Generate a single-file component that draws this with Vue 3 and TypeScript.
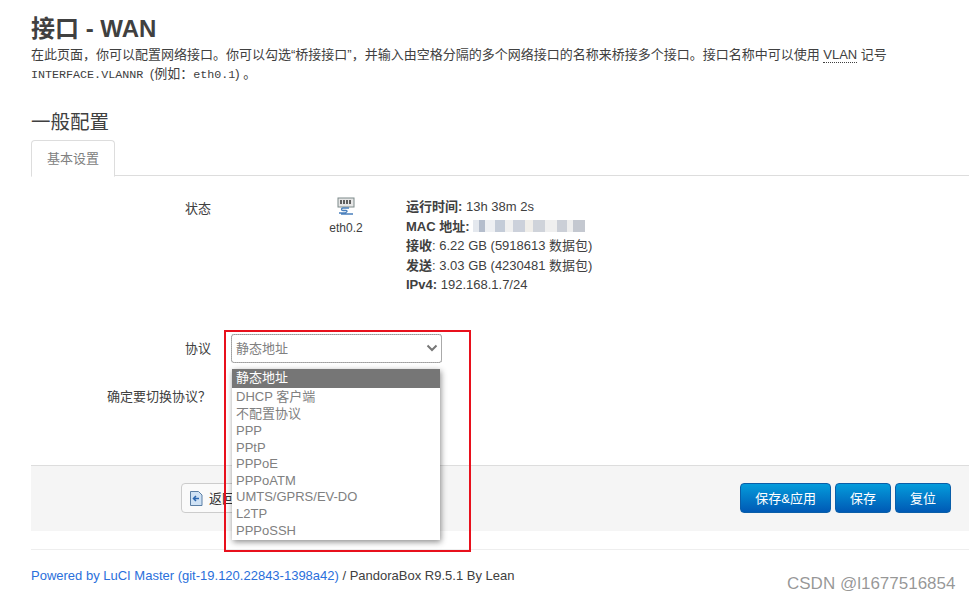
<script setup lang="ts">
const options: string[] = ['静态地址', 'DHCP 客户端', '不配置协议', 'PPP', 'PPtP', 'PPPoE', 'PPPoATM', 'UMTS/GPRS/EV-DO', 'L2TP', 'PPPoSSH']
</script>

<template>
  <div class="page">
    <h2 class="title">接口 - WAN</h2>
    <p class="desc">在此页面&#xFF0C;你可以配置网络接口。你可以勾选“桥接接口”&#xFF0C;并输入由空格分隔的多个网络接口的名称来桥接多个接口。接口名称中可以使用 <abbr class="abbr">VLAN</abbr> 记号<br><code class="mono iface">INTERFACE.VLANNR</code> (例如&#xFF1A;<code class="mono">eth0.1</code>) 。</p>
    <h3 class="section">一般配置</h3>
    <div class="tabs"><div class="tab">基本设置</div></div>

    <div class="row status-row">
      <div class="label">状态</div>
      <div class="device">
        <svg class="dev-icon" width="18" height="18" viewBox="0 0 18 18">
          <rect x="1" y="1" width="16" height="9" fill="#e6e6e6" stroke="#7d8a8a" />
          <path d="M3 4h2M6 4h2M9 4h2M12 4h2M3 6h2M6 6h2M9 6h2M12 6h2" stroke="#333" stroke-width="1.6" />
          <path d="M12 11H6c-2 0-2 2.500 0 2.500h3c2 0 1 2-1 2.500H2M4 17h12" stroke="#4a80bd" stroke-width="1.300" fill="none" />
        </svg>
        <div>eth0.2</div>
      </div>
      <div class="info">
        <div><b>运行时间:</b> 13h 38m 2s</div>
        <div class="mac-line"><b>MAC 地址:</b> <span class="mac"></span></div>
        <div><b>接收</b>: 6.22 GB (5918613 数据包)</div>
        <div><b>发送</b>: 3.03 GB (4230481 数据包)</div>
        <div><b>IPv4:</b> 192.168.1.7/24</div>
      </div>
    </div>

    <div class="row proto-row">
      <div class="label">协议</div>
      <div class="select">
        <span>静态地址</span>
        <svg width="12" height="8" viewBox="0 0 12 8"><path d="M1.500 1.500 6 6l4.500-4.500" fill="none" stroke="#777" stroke-width="2" /></svg>
      </div>
    </div>
    <div class="row switch-row">
      <div class="label">确定要切换协议&#xFF1F;</div>
    </div>

    <div class="actions">
      <div class="back">
        <svg width="14" height="15" viewBox="0 0 14 15">
          <path d="M1.500.500h8l3.500 3.500v10.500h-11.500z" fill="#cfe2f5" stroke="#5b7fa5" />
          <path d="M10 7.500H4.500M7 5 4.500 7.500 7 10" fill="none" stroke="#2a66b0" stroke-width="1.500" />
        </svg>
        <span>返回至概况</span>
      </div>
      <div class="btns">
        <button class="btn">保存&amp;应用</button>
        <button class="btn">保存</button>
        <button class="btn">复位</button>
      </div>
    </div>

    <footer class="footer">
      <a class="link">Powered by LuCI Master (git-19.120.22843-1398a42)</a> / PandoraBox R9.5.1 By Lean
    </footer>

    <ul class="dropdown">
      <li v-for="(o, i) in options" :key="o" :class="{ sel: i === 0, cjk: i < 3 }">{{ o }}</li>
    </ul>
    <div class="redbox"></div>
    <div class="watermark">CSDN @l1677516854</div>
  </div>
</template>

<style>
html, body { margin: 0; background: #fff; overflow: hidden; }
</style>

<style scoped>
.page {
  position: relative;
  width: 969px;
  height: 599px;
  overflow: hidden;
  padding: 14px 0 0 31px;
  box-sizing: border-box;
  font-family: "Liberation Sans", "Noto Sans CJK SC", sans-serif;
  font-size: 13px;
  line-height: 19px;
  color: #404040;
}
.title { margin: 0; font-size: 24px; line-height: 30px; font-weight: 700; color: #404040; }
.desc { margin: 1px 0 0; font-size: 13px; line-height: 19px; white-space: nowrap; }
.abbr { border-bottom: 1px dotted #404040; }
.mono { font-family: "Liberation Mono", "Noto Sans CJK SC", monospace; font-size: 11.700px; }
.iface { margin-right: 3px; }
.section { margin: 24px 0 0; font-size: 19.500px; line-height: 26px; font-weight: 400; color: #404040; }
.tabs { margin-top: 5px; border-bottom: 1px solid #ddd; height: 35px; display: flex; }
.tab {
  width: 82px; height: 35px; box-sizing: content-box; border: 1px solid #ddd; border-bottom: 1px solid #fff; border-radius: 4px 4px 0 0;
  display: flex; align-items: center; justify-content: center; color: #808080; background: #fff; padding-bottom: 0;
}
.row { display: flex; }
.label { width: 180px; text-align: right; flex: none; }
.status-row { margin-top: 21px; height: 136px; }
.status-row .label { padding-top: 2px; }
.device { margin-left: 119px; width: 32px; text-align: center; display: flex; flex-direction: column; align-items: center; white-space: nowrap; font-size: 12px; }
.dev-icon { display: block; margin-bottom: 4px; }
.info { margin-left: 44px; white-space: nowrap; line-height: 19.500px; }
.mac { display: inline-block; width: 112px; height: 12px; vertical-align: -1px;
  background: linear-gradient(90deg, #e4e8ee 0 6px, #b4bdcc 6px 12px, #eef0f3 12px 22px, #c4ccd8 22px 32px, #f0f0f0 32px 40px, #ccd1db 40px 52px, #f0eeea 52px 60px, #cfd3da 60px 72px, #efefef 72px 84px, #cbcfd7 84px 94px, #eeeeee 94px 100px, #c4c8d0 100px 112px); }
.proto-row { align-items: center; height: 30px; }
.select {
  margin-left: 20px; width: 211px; height: 29px; box-sizing: border-box; border: 1px solid #bbb; border-radius: 3px;
  outline: 1px dotted #999; outline-offset: -1px;
  display: flex; align-items: center; justify-content: space-between; padding: 0 3px 0 4px; color: #808080;
}
.switch-row { margin-top: 24px; height: 19px; }
.actions {
  margin-top: 59px; height: 66px; background: #f5f5f5; border-top: 1px solid #ddd;
  display: flex; align-items: center; justify-content: space-between; padding: 0 18px 1px 150px; box-sizing: border-box;
}
.back {
  display: flex; align-items: center; gap: 6px; height: 30px; width: 140px; box-sizing: border-box; padding-left: 7px;
  border: 1px solid #ccc; border-radius: 4px; background: #fafafa; color: #333; white-space: nowrap;
}
.btns { display: flex; gap: 4px; }
.btn {
  height: 30px; padding: 0 14px; border: 1px solid #0a5ea8; border-radius: 4px;
  background: linear-gradient(#049cdb, #0059b5); color: #fff;
  font: inherit; display: block;
}
.footer { margin-top: 18px; padding-top: 16px; border-top: 1px solid #eee; font-size: 13px; line-height: 19px; }
.link { color: #2a6fdb; }
.dropdown {
  position: absolute; left: 232px; top: 369px; width: 208px; margin: 0; padding: 0 0 1px; list-style: none; background: #fff;
  box-shadow: 1px 2px 6px rgba(0, 0, 0, .45); color: #808080; line-height: 16.600px; font-size: 13px;
}
.dropdown li { padding-left: 4px; white-space: nowrap; }
.dropdown .cjk { line-height: 17.700px; }
.dropdown .sel { background: #767676; color: #fff; line-height: 18.700px; }
.redbox { position: absolute; left: 224px; top: 330px; width: 247px; height: 222px; box-sizing: border-box; border: 2px solid #e8101c; }
.watermark { position: absolute; left: 787px; top: 574px; font-size: 17px; line-height: 20px; color: rgba(80, 80, 80, .6); }
</style>
